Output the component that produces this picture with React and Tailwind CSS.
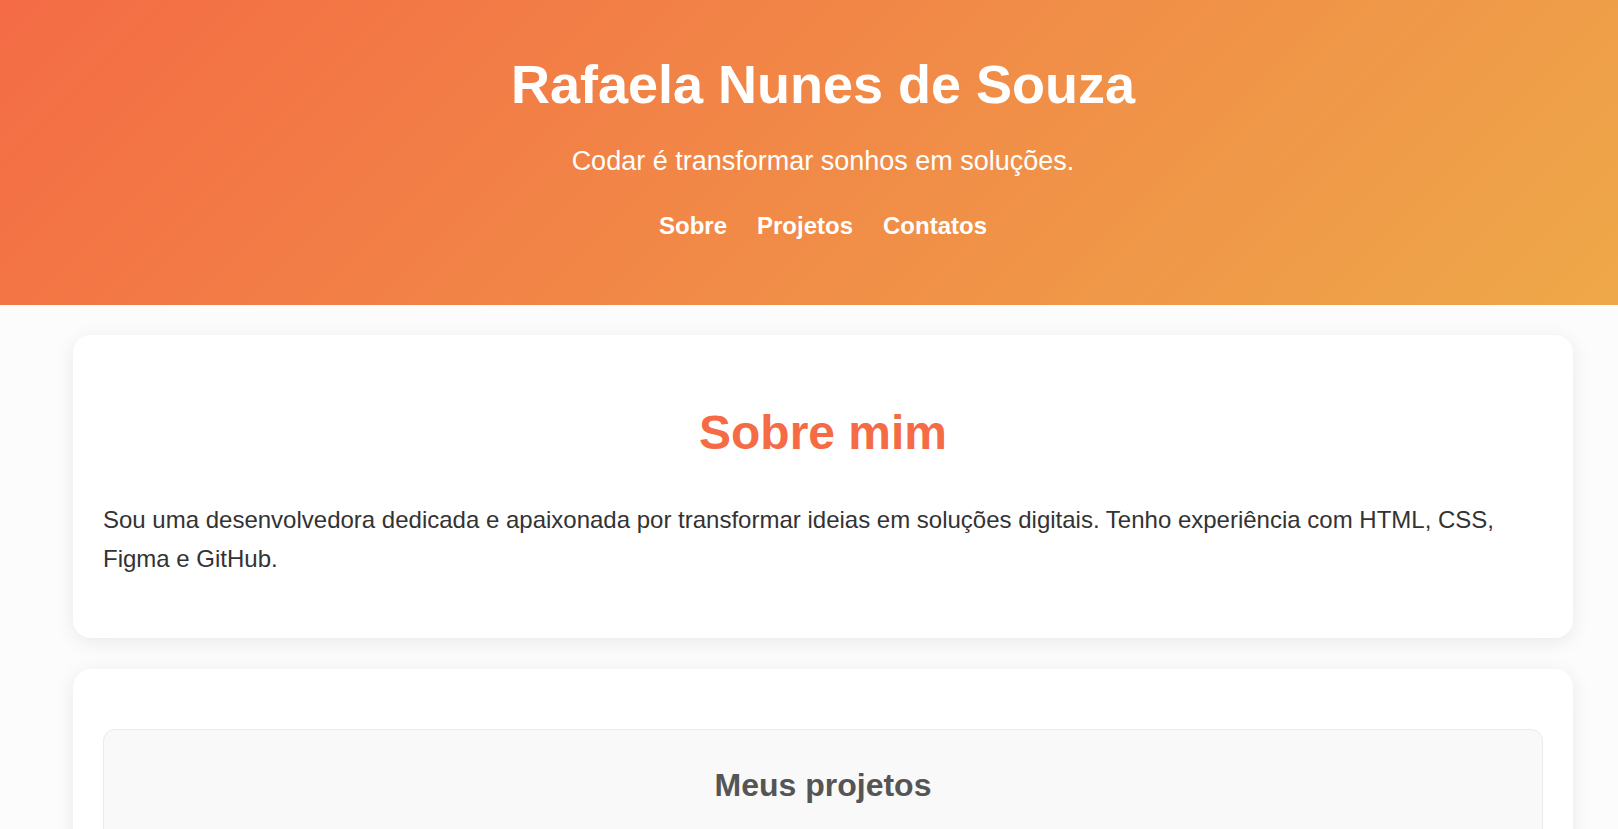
export default function App() {
  const font = { fontFamily: '"Liberation Sans", Arial, Helvetica, sans-serif' };
  return (
    <div className="min-h-screen bg-[#fcfcfc] text-[#333]" style={font}>
      <header className="h-[305px] w-full bg-[linear-gradient(135deg,#f46b45,#eea849)] pl-[28px] pt-[53px] flex flex-col items-center text-white">
        <h1 className="text-[54px] leading-[62px] font-bold">Rafaela Nunes de Souza</h1>
        <p className="mt-[31px] text-[27px] leading-[31px]">Codar é transformar sonhos em soluções.</p>
        <nav className="mt-[35px] flex gap-[30px] text-[24px] leading-[28px] font-bold">
          <a href="#sobre" className="text-white">Sobre</a>
          <a href="#projetos" className="text-white">Projetos</a>
          <a href="#contatos" className="text-white">Contatos</a>
        </nav>
      </header>

      <main className="pb-[30px]">
        <section id="sobre" className="ml-[73px] mt-[30px] w-[1500px] rounded-[18px] bg-white px-[30px] pt-[30px] pb-[60px] shadow-[0_4px_20px_rgba(0,0,0,0.08)]">
          <h2 className="mt-[40px] mb-[40px] text-center text-[48px] leading-[55px] font-bold text-[#f46b45]">Sobre mim</h2>
          <p className="text-[24px] leading-[39px] text-[#333]">
            Sou uma desenvolvedora dedicada e apaixonada por transformar ideias em soluções digitais. Tenho experiência com HTML, CSS, Figma e GitHub.
          </p>
        </section>

        <section id="projetos" className="ml-[73px] mt-[31px] w-[1500px] rounded-[18px] bg-white px-[30px] pt-[30px] pb-[30px] shadow-[0_4px_20px_rgba(0,0,0,0.08)]">
          <div className="mt-[30px] rounded-[12px] border border-[#ebebeb] bg-[#f9f9f9] px-[30px] pt-[37px] pb-[60px]">
            <h3 className="text-center text-[32px] leading-[37px] font-bold text-[#555]">Meus projetos</h3>
          </div>
        </section>
      </main>
    </div>
  );
}
